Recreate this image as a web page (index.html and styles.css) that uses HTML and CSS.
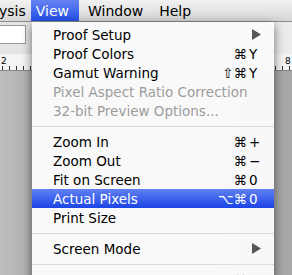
FILE: index.html
```
<!DOCTYPE html>
<html lang="en">
<head>
    <meta charset="UTF-8">
    <title>View menu</title>
    <link rel="stylesheet" href="styles.css">
</head>
<body>
    <div class="menubar">
        <span class="bar-item cut">ysis</span>
        <span class="bar-item active">View</span>
        <span class="bar-item">Window</span>
        <span class="bar-item">Help</span>
    </div>

    <div class="workspace">
        <div class="toolbar">
            <div class="field"></div>
        </div>
        <div class="ruler">
            <span class="ruler-num left">2</span>
            <span class="ruler-num right">8</span>
        </div>
        <div class="canvas"></div>
    </div>

    <div class="menu">
        <div class="item"><span class="label">Proof Setup</span><span class="submenu"><svg width="9" height="11" viewBox="0 0 9 11"><polygon points="0,0 9,5.5 0,11" fill="#555"/></svg></span></div>
        <div class="item"><span class="label">Proof Colors</span><span class="keys"><span class="mods">⌘</span><span class="key">Y</span></span></div>
        <div class="item"><span class="label">Gamut Warning</span><span class="keys"><span class="mods">⇧⌘</span><span class="key">Y</span></span></div>
        <div class="item disabled"><span class="label">Pixel Aspect Ratio Correction</span></div>
        <div class="item disabled"><span class="label">32-bit Preview Options...</span></div>
        <div class="sep"></div>
        <div class="item"><span class="label">Zoom In</span><span class="keys"><span class="mods">⌘</span><span class="key">+</span></span></div>
        <div class="item"><span class="label">Zoom Out</span><span class="keys"><span class="mods">⌘</span><span class="key">−</span></span></div>
        <div class="item"><span class="label">Fit on Screen</span><span class="keys"><span class="mods">⌘</span><span class="key">0</span></span></div>
        <div class="item selected"><span class="label">Actual Pixels</span><span class="keys"><span class="mods">⌥⌘</span><span class="key">0</span></span></div>
        <div class="item"><span class="label">Print Size</span></div>
        <div class="sep"></div>
        <div class="item"><span class="label">Screen Mode</span><span class="submenu"><svg width="9" height="11" viewBox="0 0 9 11"><polygon points="0,0 9,5.5 0,11" fill="#555"/></svg></span></div>
        <div class="sep"></div>
        <div class="item"><span class="label">Extras</span><span class="keys"><span class="mods">⌘</span><span class="key">H</span></span></div>
    </div>
</body>
</html>
```

FILE: styles.css
```
* {
    box-sizing: border-box;
}

body {
    margin: 0;
    width: 292px;
    height: 275px;
    overflow: hidden;
    position: relative;
    font-family: "DejaVu Sans", sans-serif;
    background: #aaa;
}

.menubar {
    height: 22px;
    display: flex;
    align-items: stretch;
    background: linear-gradient(#f2f2f2, #d6d6d6);
    border-bottom: 1px solid #8e8e8e;
    font-size: 14px;
    color: #000;
}

.bar-item {
    display: flex;
    align-items: center;
    padding: 0 9px;
}

.bar-item.cut {
    margin-left: -10px;
    padding-right: 4px;
}

.bar-item.active {
    margin-left: 1px;
    padding: 0 10px 0 5px;
    color: #fff;
    background: linear-gradient(#6683f2, #2450ea);
}

.bar-item:last-child {
    margin-left: -2px;
}

.workspace {
    display: flex;
    flex-direction: column;
    height: 253px;
}

.toolbar {
    height: 32px;
    background: linear-gradient(90deg, #e4e4e4, #ececec);
    padding: 3px 0 0 0;
}

.field {
    width: 26px;
    height: 19px;
    background: #fff;
    border: 1px solid #9a9a9a;
    border-left: none;
}

.ruler {
    height: 17px;
    position: relative;
    background:
        repeating-linear-gradient(90deg, #333 0 1px, transparent 1px 7px) 2px 12px / 100% 4px no-repeat,
        #f4f4f4;
    border-bottom: 1px solid #888;
}

.ruler-num {
    position: absolute;
    top: 2px;
    font-size: 9px;
    color: #000;
}

.ruler-num.left {
    left: 1px;
}

.ruler-num.right {
    left: 285px;
}

.canvas {
    flex: 1;
    background: linear-gradient(90deg, #bdbdbd, #b2b2b2 30px, #a8a8a8);
}

.menu {
    position: absolute;
    left: 32px;
    top: 22px;
    width: 242px;
    height: 262px;
    padding-top: 3px;
    background: rgba(250, 250, 250, 0.98);
    box-shadow: 0 3px 10px rgba(0, 0, 0, 0.55);
    font-size: 13.5px;
    color: #000;
}

.item {
    height: 19px;
    display: flex;
    align-items: center;
    justify-content: space-between;
    padding: 0 15px 0 21px;
}

.item.disabled {
    color: #9c9c9c;
}

.item.selected {
    color: #fff;
    background: linear-gradient(#6181f3, #1b44e6);
}

.keys {
    display: flex;
}

.mods {
    text-align: right;
}

.key {
    width: 10px;
    margin-left: 2px;
}

.submenu {
    display: flex;
    margin-right: -2px;
}

.sep {
    height: 12px;
    display: flex;
    align-items: center;
}

.sep::after {
    content: "";
    display: block;
    width: 100%;
    height: 1px;
    background: #dcdcdc;
}
```
